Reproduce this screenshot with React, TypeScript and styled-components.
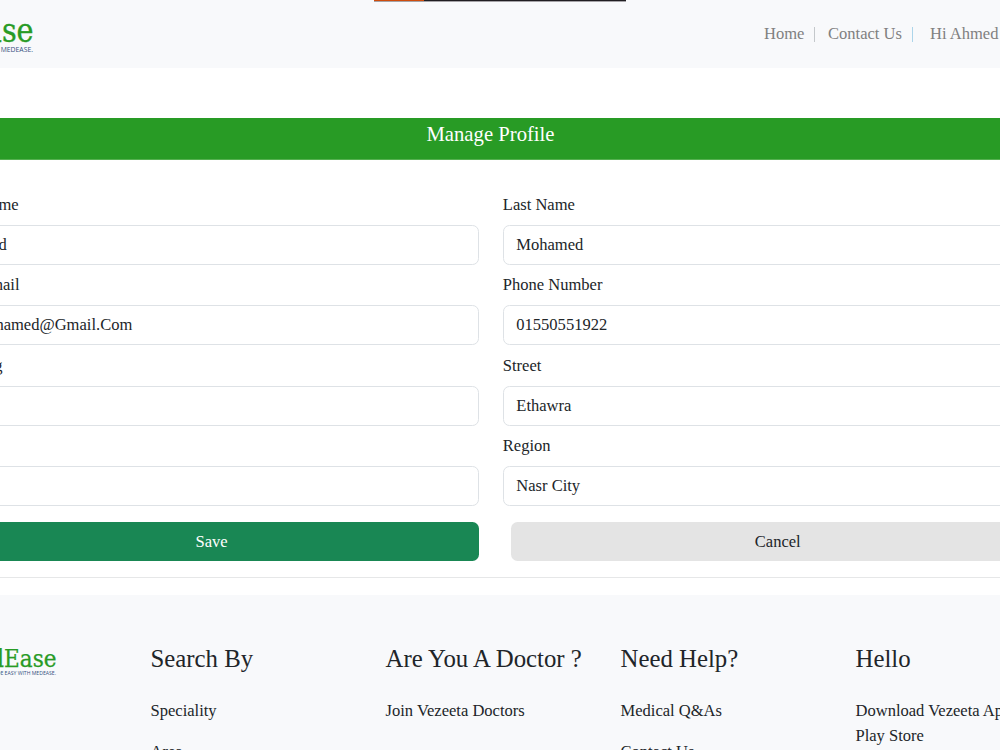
import React from "react";
import styled, { createGlobalStyle } from "styled-components";

const GlobalStyle = createGlobalStyle`
  * { box-sizing: border-box; }
  body {
    margin: 0;
    background: #fff;
    color: #212529;
    font-family: "Liberation Serif", "Times New Roman", serif;
    font-size: 16.55px;
    line-height: 25px;
  }
`;

const Page = styled.div`
  height: 750px;
  overflow: hidden;
`;

const Header = styled.header`
  display: flex;
  justify-content: space-between;
  height: 68px;
  background: #f8f9fb;
`;

const TopStrip = styled.div`
  position: absolute;
  top: 0;
  left: 374px;
  width: 252px;
  height: 2px;
  border-bottom: 1px solid #a5a3a7;
  background: linear-gradient(to right, #cf4d0d 50px, #201e22 50px);
`;

const Logo = styled.svg<{ $scale: number; $shift: number; $top: number }>`
  display: block;
  flex: none;
  width: ${(p) => 118 * p.$scale}px;
  height: ${(p) => 42 * p.$scale}px;
  margin-left: ${(p) => p.$shift}px;
  margin-top: ${(p) => p.$top}px;
`;

const Nav = styled.nav`
  display: flex;
  flex: none;
  width: 236px;
  padding-top: 21px;
  color: #808080;
  white-space: nowrap;
`;

const NavItem = styled.span<{ $width: number }>`
  flex: none;
  width: ${(p) => p.$width}px;
`;

const Divider = styled.span<{ $color: string; $gap: number }>`
  flex: none;
  width: 1px;
  height: 15px;
  margin: 6px ${(p) => p.$gap}px 0 0;
  background: ${(p) => p.$color};
`;

const Banner = styled.h1`
  height: 42px;
  margin: 50px 0 0;
  padding-right: 19px;
  border-bottom: 1px solid #55b050;
  background: #289b25;
  color: #fff;
  font-size: 20.7px;
  font-weight: 400;
  line-height: 33px;
  text-align: center;
`;

const Form = styled.form`
  display: grid;
  grid-template-columns: 533.9px 533.9px;
  column-gap: 24.2px;
  width: 1092px;
  margin: 31.9px 0 0 -55.3px;
`;

const Field = styled.label`
  display: flex;
  flex-direction: column;
  height: 80.5px;
`;

const Input = styled.input`
  width: 100%;
  height: 40px;
  margin-top: 8px;
  padding: 0 12.5px 0.6px;
  border: 1px solid #dee2e6;
  border-radius: 6.5px;
  outline: 0;
  background: #fff;
  color: #212529;
  font: inherit;
`;

const Actions = styled.div`
  display: flex;
  gap: 32.3px;
  width: 1100px;
  margin: 8.2px 0 0 -55.3px;
`;

const Button = styled.button<{ $primary?: boolean }>`
  width: 533.9px;
  height: 39px;
  padding: 0 0 1px;
  border: 0;
  border-radius: 6.5px;
  background: ${(p) => (p.$primary ? "#198754" : "#e4e4e4")};
  color: ${(p) => (p.$primary ? "#fff" : "#212529")};
  font: inherit;
`;

const Rule = styled.hr`
  height: 1px;
  margin: 16px 0 17px;
  border: 0;
  background: #e6e7e8;
`;

const Footer = styled.footer`
  display: grid;
  grid-template-columns: 150.5px repeat(4, 235px);
  height: 155px;
  background: #f8f9fb;
`;

const Column = styled.section`
  padding-top: 49px;
  white-space: nowrap;
`;

const ColumnTitle = styled.h2`
  margin: 0;
  font-size: 24.8px;
  font-weight: 400;
  line-height: 30px;
`;

const Links = styled.ul`
  margin: 24px 0 0;
  padding: 0;
  list-style: none;
`;

const LinkItem = styled.li`
  margin-bottom: 16px;
`;

const BrandName = styled.text`
  fill: #289b25;
  stroke: #289b25;
  stroke-width: 0.25px;
  font-family: "DejaVu Serif Condensed", "DejaVu Serif", serif;
  font-stretch: condensed;
  font-size: 24.5px;
`;

const Tagline = styled.text`
  fill: #355080;
  font-family: "Open Sans", sans-serif;
  font-size: 5px;
`;

function Brand({ scale, shift, top }: { scale: number; shift: number; top: number }) {
  return (
    <Logo $scale={scale} $shift={shift} $top={top} viewBox="0 0 118 42">
      <BrandName x="1" y="28.3" fontWeight="700" textLength="59" lengthAdjust="spacingAndGlyphs">
        Med
      </BrandName>
      <BrandName x="60" y="28.3" textLength="52.5" lengthAdjust="spacingAndGlyphs">
        Ease
      </BrandName>
      <Tagline x="12" y="36" textLength="100" lengthAdjust="spacingAndGlyphs">
        HEALTHCARE MADE EASY WITH MEDEASE.
      </Tagline>
    </Logo>
  );
}

const fields = [
  ["First Name", "Ahmed"],
  ["Last Name", "Mohamed"],
  ["User Email", "A.mohamed@Gmail.Com"],
  ["Phone Number", "01550551922"],
  ["Building", ""],
  ["Street", "Ethawra"],
  ["City", ""],
  ["Region", "Nasr City"],
];

const columns = [
  { title: "Search By", links: ["Speciality", "Area"] },
  { title: "Are You A Doctor ?", links: ["Join Vezeeta Doctors"] },
  { title: "Need Help?", links: ["Medical Q&As", "Contact Us"] },
];

export default function App() {
  return (
    <Page>
      <GlobalStyle />
      <Header>
        <TopStrip />
        <Brand scale={1.33} shift={-116} top={4} />
        <Nav>
          <NavItem $width={50}>Home</NavItem>
          <Divider $color="#c4c8cb" $gap={13} />
          <NavItem $width={84}>Contact Us</NavItem>
          <Divider $color="#acd5ea" $gap={17} />
          <NavItem $width={70}>Hi Ahmed</NavItem>
        </Nav>
      </Header>
      <Banner>Manage Profile</Banner>
      <Form>
        {fields.map(([label, value]) => (
          <Field key={label}>
            {label}
            <Input defaultValue={value} />
          </Field>
        ))}
      </Form>
      <Actions>
        <Button type="button" $primary>Save</Button>
        <Button type="button">Cancel</Button>
      </Actions>
      <Rule />
      <Footer>
        <Brand scale={1} shift={-56} top={44} />
        {columns.map((column) => (
          <Column key={column.title}>
            <ColumnTitle>{column.title}</ColumnTitle>
            <Links>
              {column.links.map((link) => (
                <LinkItem key={link}>{link}</LinkItem>
              ))}
            </Links>
          </Column>
        ))}
        <Column>
          <ColumnTitle>Hello</ColumnTitle>
          <Links>
            <LinkItem>
              Download Vezeeta App From
              <br />
              Play Store
            </LinkItem>
          </Links>
        </Column>
      </Footer>
    </Page>
  );
}
